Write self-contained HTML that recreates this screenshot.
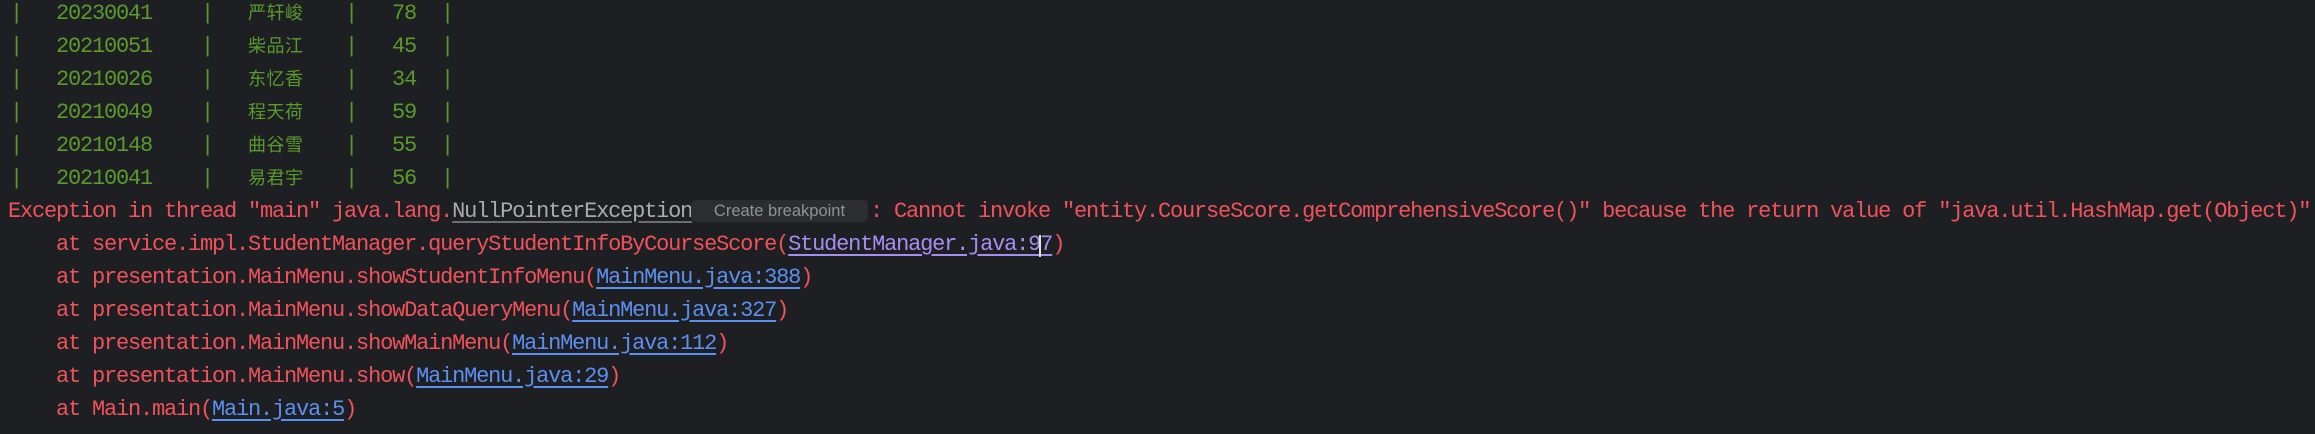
<!DOCTYPE html>
<html><head><meta charset="utf-8"><style>
html,body{margin:0;padding:0;background:#1e1f22;width:2315px;height:434px;overflow:hidden}
.l{position:absolute;left:8px;height:33px;line-height:33px;font-family:"Liberation Mono","Noto Sans CJK SC",monospace;font-size:22px;letter-spacing:-1.2px;white-space:pre;color:#f0525b}
.g{color:#5a9a2c}
.a{position:absolute}
.cj{font-family:"Noto Sans CJK SC",sans-serif;font-size:18px;letter-spacing:0.5px;top:-1px}
.np{color:#a8abb0;text-decoration:underline;text-decoration-color:#6a6d72;text-underline-offset:4px}
.lk{color:#5b8ff0;text-decoration:underline;text-underline-offset:4px}
.lp{color:#a58ef2;text-decoration:underline;text-underline-offset:4px}
.tip{position:absolute;left:691px;top:200px;width:177px;height:22px;background:#2b2d30;border-radius:5px;color:#8e9196;font-family:"Liberation Sans",sans-serif;font-size:16.5px;line-height:22px;text-align:center}
.caret{position:absolute;left:1039px;top:235px;width:2px;height:22px;background:#dfe1e5}
</style></head><body>
<div class="l g" style="top:-3.5px;left:0;width:500px"><span class="a" style="left:10px">|</span><span class="a" style="left:56px">20230041</span><span class="a" style="left:201px">|</span><span class="a cj" style="left:248px">严轩峻</span><span class="a" style="left:345px">|</span><span class="a" style="left:392px">78</span><span class="a" style="left:441px">|</span></div>
<div class="l g" style="top:29.5px;left:0;width:500px"><span class="a" style="left:10px">|</span><span class="a" style="left:56px">20210051</span><span class="a" style="left:201px">|</span><span class="a cj" style="left:248px">柴品江</span><span class="a" style="left:345px">|</span><span class="a" style="left:392px">45</span><span class="a" style="left:441px">|</span></div>
<div class="l g" style="top:62.5px;left:0;width:500px"><span class="a" style="left:10px">|</span><span class="a" style="left:56px">20210026</span><span class="a" style="left:201px">|</span><span class="a cj" style="left:248px">东忆香</span><span class="a" style="left:345px">|</span><span class="a" style="left:392px">34</span><span class="a" style="left:441px">|</span></div>
<div class="l g" style="top:95.5px;left:0;width:500px"><span class="a" style="left:10px">|</span><span class="a" style="left:56px">20210049</span><span class="a" style="left:201px">|</span><span class="a cj" style="left:248px">程天荷</span><span class="a" style="left:345px">|</span><span class="a" style="left:392px">59</span><span class="a" style="left:441px">|</span></div>
<div class="l g" style="top:128.5px;left:0;width:500px"><span class="a" style="left:10px">|</span><span class="a" style="left:56px">20210148</span><span class="a" style="left:201px">|</span><span class="a cj" style="left:248px">曲谷雪</span><span class="a" style="left:345px">|</span><span class="a" style="left:392px">55</span><span class="a" style="left:441px">|</span></div>
<div class="l g" style="top:161.5px;left:0;width:500px"><span class="a" style="left:10px">|</span><span class="a" style="left:56px">20210041</span><span class="a" style="left:201px">|</span><span class="a cj" style="left:248px">易君宇</span><span class="a" style="left:345px">|</span><span class="a" style="left:392px">56</span><span class="a" style="left:441px">|</span></div>
<div class="l" style="top:194.5px">Exception in thread "main" java.lang.<span class="np">NullPointerException</span></div>
<div class="tip">Create breakpoint</div>
<div class="l" style="top:194.5px;left:870px">: Cannot invoke "entity.CourseScore.getComprehensiveScore()" because the return value of "java.util.HashMap.get(Object)"</div>
<div class="l" style="top:227.5px">    at service.impl.StudentManager.queryStudentInfoByCourseScore(<span class="lp">StudentManager.java:97</span>)</div>
<div class="caret"></div>
<div class="l" style="top:260.5px">    at presentation.MainMenu.showStudentInfoMenu(<span class="lk">MainMenu.java:388</span>)</div>
<div class="l" style="top:293.5px">    at presentation.MainMenu.showDataQueryMenu(<span class="lk">MainMenu.java:327</span>)</div>
<div class="l" style="top:326.5px">    at presentation.MainMenu.showMainMenu(<span class="lk">MainMenu.java:112</span>)</div>
<div class="l" style="top:359.5px">    at presentation.MainMenu.show(<span class="lk">MainMenu.java:29</span>)</div>
<div class="l" style="top:392.5px">    at Main.main(<span class="lk">Main.java:5</span>)</div>
</body></html>
